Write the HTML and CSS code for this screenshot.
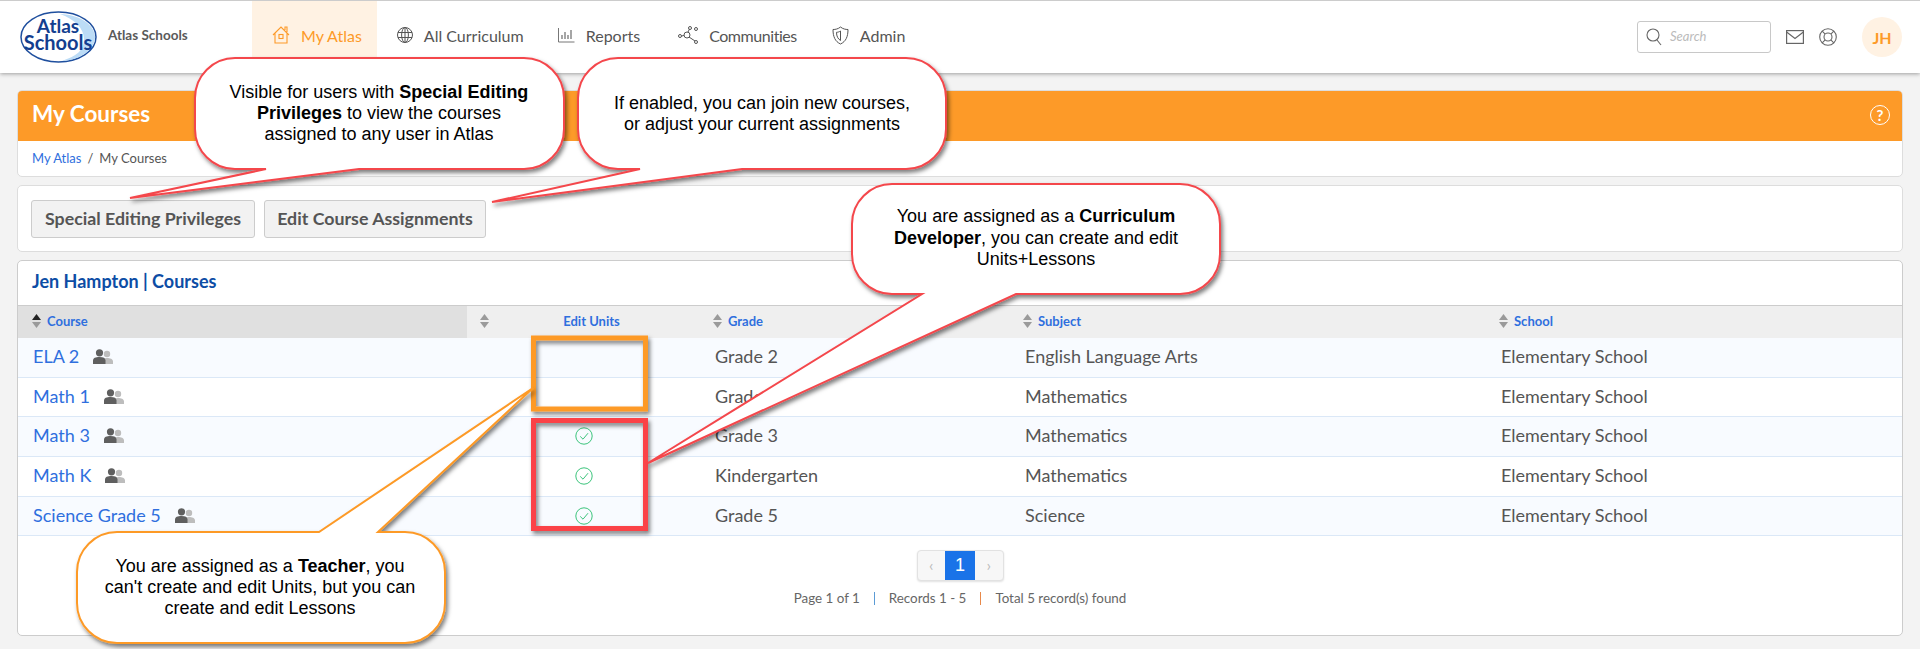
FILE: index.html
```html
<!DOCTYPE html>
<html lang="en">
<head>
    <meta charset="UTF-8">
    <meta name="viewport" content="width=device-width, initial-scale=1.0">
    <title>My Courses</title>
    <link rel="stylesheet" href="styles.css">
</head>
<body>
    <svg class="defs" width="0" height="0">
        <defs>
            <symbol id="sort" viewBox="0 0 9 14">
                <path d="M4.5 0 9 6H0z" fill="#9a9a9a"/>
                <path d="M4.5 14 9 8H0z" fill="#9a9a9a"/>
            </symbol>
            <symbol id="sort-up" viewBox="0 0 9 14">
                <path d="M4.5 0 9 6H0z" fill="#222"/>
                <path d="M4.5 14 9 8H0z" fill="#9a9a9a"/>
            </symbol>
            <symbol id="people" viewBox="0 0 20 16">
                <circle cx="14" cy="5" r="3.2" fill="#bdbdbd"/>
                <path d="M9 15v-2.5C9 10 11 9 14 9s6 1 6 3.5V15z" fill="#bdbdbd"/>
                <circle cx="6.5" cy="3.8" r="3.6" fill="#5f5f5f"/>
                <path d="M0 15v-3.5C0 9 2.5 8 6.5 8s6 1 6 3.5V15z" fill="#5f5f5f"/>
            </symbol>
            <symbol id="check" viewBox="0 0 18 18">
                <circle cx="9" cy="9" r="8.2" fill="none" stroke="#3cc47c" stroke-width="1"/>
                <path d="M5.2 9.4 8 12.2 13 6.2" fill="none" stroke="#3cc47c" stroke-width="1"/>
            </symbol>
            <filter id="drop" x="-10%" y="-10%" width="125%" height="125%">
                <feDropShadow dx="2" dy="3" stdDeviation="2.2" flood-color="#000" flood-opacity="0.5"/>
            </filter>
        </defs>
    </svg>

    <header class="topbar">
        <div class="brand">
            <svg class="logo" viewBox="0 0 77 52" width="77" height="52">
                <ellipse cx="38.5" cy="26" rx="37.5" ry="25" fill="#fff" stroke="#1f4f9e" stroke-width="1.5"/>
                <path d="M40 3C62 4 75 15 75 26c0 12-14 23-33 24 14-5 22-10 22-22C64 17 54 8 40 3z" fill="#bcdcf6"/>
                <text class="logo-text" x="38" y="22" font-size="19">Atlas</text>
                <text class="logo-text" x="38" y="39" font-size="20">Schools</text>
            </svg>
            <span class="brand-name">Atlas Schools</span>
        </div>
        <nav class="nav">
            <a class="nav-item active">
                <svg width="18" height="20" viewBox="0 0 18 20" fill="none" stroke="#fd9a28" stroke-width="1.1">
                    <path d="M1 10 9 2l8 8M3 8v10h12V8M13 5V2h2v5"/>
                    <rect x="7" y="9.5" width="4" height="4"/>
                </svg>
                My Atlas
            </a>
            <a class="nav-item nav-curriculum">
                <svg width="16" height="18" viewBox="0 0 16 18" fill="none" stroke="#555" stroke-width="1">
                    <circle cx="8" cy="9" r="7.5"/>
                    <ellipse cx="8" cy="9" rx="3.4" ry="7.5"/>
                    <path d="M8 1.5v15M1 6.5h14M1 11.5h14"/>
                </svg>
                All Curriculum
            </a>
            <a class="nav-item">
                <svg width="17" height="16" viewBox="0 0 17 16" fill="none" stroke="#777" stroke-width="1">
                    <path d="M.5 1v14h16"/>
                    <path d="M4 12V8M7 12V5M10 12V8M13 12V3" stroke-width="1.3"/>
                </svg>
                Reports
            </a>
            <a class="nav-item nav-communities">
                <svg width="20" height="18" viewBox="0 0 20 18" fill="none" stroke="#555" stroke-width="1">
                    <circle cx="2" cy="10" r="1.5"/>
                    <circle cx="9" cy="9" r="3"/>
                    <circle cx="12" cy="2" r="1.5"/>
                    <circle cx="18" cy="3" r="1.5"/>
                    <circle cx="18" cy="16" r="1.5"/>
                    <path d="M3.5 10 6 9.5M10 6l1.5-3M11 11l6 4"/>
                </svg>
                Communities
            </a>
            <a class="nav-item">
                <svg width="17" height="19" viewBox="0 0 17 19" fill="none" stroke="#555" stroke-width="1">
                    <path d="M8.5 1C6 3 3.5 3.5 1 3.5c0 7 2 12 7.5 14.500C14 15.500 16 10.500 16 3.500 13.500 3.500 11 3 8.500 1z"/>
                    <path d="M8.5 5C7 6 5.500 6.300 4.500 6.300c0 4 1.500 6.700 4 8.200z"/>
                </svg>
                Admin
            </a>
        </nav>
        <div class="top-tools">
            <label class="search">
                <svg width="16" height="18" viewBox="0 0 16 18" fill="none" stroke="#666" stroke-width="1.1">
                    <circle cx="7" cy="7" r="6"/>
                    <path d="M11 12l4 5"/>
                </svg>
                <span class="search-hint">Search</span>
            </label>
            <svg width="18" height="14" viewBox="0 0 18 14" fill="none" stroke="#666" stroke-width="1.2">
                <rect x=".6" y=".6" width="16.8" height="12.8"/>
                <path d="M.6 2 9 8.5 17.4 2"/>
            </svg>
            <svg width="18" height="18" viewBox="0 0 18 18" fill="none" stroke="#666" stroke-width="1.1">
                <circle cx="9" cy="9" r="8.3"/>
                <circle cx="9" cy="9" r="4"/>
                <path d="M3.2 3.2 6.2 6.2M14.8 3.2 11.8 6.2M3.2 14.8 6.2 11.8M14.8 14.8 11.8 11.8"/>
            </svg>
            <div class="avatar">JH</div>
        </div>
    </header>

    <main class="content">
        <section class="panel">
            <div class="title-bar">
                <h1>My Courses</h1>
                <span class="help">?</span>
            </div>
            <div class="breadcrumb"><a>My Atlas</a><span class="slash">/</span>My Courses</div>
        </section>

        <section class="panel actions">
            <button class="btn btn-special">Special Editing Privileges</button>
            <button class="btn">Edit Course Assignments</button>
        </section>

        <section class="panel courses">
            <h2 class="courses-title">Jen Hampton | Courses</h2>
            <table class="course-table">
                <colgroup>
                    <col class="col-course">
                    <col class="col-units">
                    <col class="col-grade">
                    <col class="col-subject">
                    <col>
                </colgroup>
                <thead>
                    <tr>
                        <th class="sorted"><span class="th-in"><svg class="sort"><use href="#sort-up"/></svg>Course</span></th>
                        <th><span class="th-in th-units"><svg class="sort"><use href="#sort"/></svg><span class="th-center">Edit Units</span></span></th>
                        <th><span class="th-in"><svg class="sort"><use href="#sort"/></svg>Grade</span></th>
                        <th><span class="th-in"><svg class="sort"><use href="#sort"/></svg>Subject</span></th>
                        <th><span class="th-in"><svg class="sort"><use href="#sort"/></svg>School</span></th>
                    </tr>
                </thead>
                <tbody>
                    <tr>
                        <td class="name"><a>ELA 2</a><svg class="people"><use href="#people"/></svg></td>
                        <td class="units"></td>
                        <td>Grade 2</td>
                        <td>English Language Arts</td>
                        <td>Elementary School</td>
                    </tr>
                    <tr>
                        <td class="name"><a>Math 1</a><svg class="people"><use href="#people"/></svg></td>
                        <td class="units"></td>
                        <td>Grade 1</td>
                        <td>Mathematics</td>
                        <td>Elementary School</td>
                    </tr>
                    <tr>
                        <td class="name"><a>Math 3</a><svg class="people"><use href="#people"/></svg></td>
                        <td class="units"><svg class="check"><use href="#check"/></svg></td>
                        <td>Grade 3</td>
                        <td>Mathematics</td>
                        <td>Elementary School</td>
                    </tr>
                    <tr>
                        <td class="name"><a>Math K</a><svg class="people"><use href="#people"/></svg></td>
                        <td class="units"><svg class="check"><use href="#check"/></svg></td>
                        <td>Kindergarten</td>
                        <td>Mathematics</td>
                        <td>Elementary School</td>
                    </tr>
                    <tr>
                        <td class="name"><a>Science Grade 5</a><svg class="people"><use href="#people"/></svg></td>
                        <td class="units"><svg class="check"><use href="#check"/></svg></td>
                        <td>Grade 5</td>
                        <td>Science</td>
                        <td>Elementary School</td>
                    </tr>
                </tbody>
            </table>
            <div class="paging">
                <div class="pager">
                    <span class="pager-arrow">&#8249;</span>
                    <span class="pager-num">1</span>
                    <span class="pager-arrow">&#8250;</span>
                </div>
                <div class="paging-info">
                    <span>Page 1 of 1</span><i class="sep sep-blue"></i><span>Records 1 - 5</span><i class="sep sep-orange"></i><span>Total 5 record(s) found</span>
                </div>
            </div>
        </section>
    </main>

    <!-- annotations drawn over the screenshot -->
    <svg class="marks" width="1920" height="649" viewBox="0 0 1920 649">
        <g filter="url(#drop)" fill="none" stroke-width="5">
            <rect x="533.5" y="338" width="112" height="71" stroke="#fd9a28"/>
            <rect x="533.5" y="420.5" width="112" height="108" stroke="#fb4346"/>
        </g>
        <g filter="url(#drop)" fill="#fff" stroke="#f4474c" stroke-width="2">
            <path d="M235 58H524A40 40 0 0 1 564 98V129A40 40 0 0 1 524 169H359L130 198 266 169H235A40 40 0 0 1 195 129V98A40 40 0 0 1 235 58Z"/>
            <path d="M618 58H906A40 40 0 0 1 946 98V129A40 40 0 0 1 906 169H742L492 202 640 169H618A40 40 0 0 1 578 129V98A40 40 0 0 1 618 58Z"/>
            <path d="M892 184H1180A40 40 0 0 1 1220 224V254A40 40 0 0 1 1180 294H1016L648 463 922 294H892A40 40 0 0 1 852 254V224A40 40 0 0 1 892 184Z"/>
            <path stroke="#fd9a28" d="M117 532H319L533 388 378 532H405A40 40 0 0 1 445 572V603A40 40 0 0 1 405 643H117A40 40 0 0 1 77 603V572A40 40 0 0 1 117 532Z"/>
        </g>
    </svg>
    <div class="note note-special">Visible for users with <b>Special Editing</b><br><b>Privileges</b> to view the courses<br>assigned to any user in Atlas</div>
    <div class="note note-assign">If enabled, you can join new courses,<br>or adjust your current assignments</div>
    <div class="note note-developer">You are assigned as a <b>Curriculum</b><br><b>Developer</b>, you can create and edit<br>Units+Lessons</div>
    <div class="note note-teacher">You are assigned as a <b>Teacher</b>, you<br>can't create and edit Units, but you can<br>create and edit Lessons</div>
</body>
</html>
```

FILE: styles.css
```css
/* Basic reset */
* {
    margin: 0;
    padding: 0;
    box-sizing: border-box;
}

body {
    position: relative;
    height: 649px;
    overflow: hidden;
    background-color: #f3f3f3;
    color: #555;
    font-family: 'Lato', sans-serif;
}

.defs {
    position: absolute;
}

a {
    color: #2f6fde;
}

/* Top bar */
.topbar {
    display: flex;
    align-items: stretch;
    height: 73px;
    padding-right: 18px;
    background-color: #fff;
    border-top: 1px solid #ccc;
    box-shadow: 0 1px 4px rgba(0, 0, 0, 0.35);
}

.brand {
    display: flex;
    align-items: center;
    gap: 11px;
    width: 252px;
    padding-left: 20px;
}

.logo-text {
    fill: #133e8f;
    font-family: 'Lato', sans-serif;
    font-weight: 700;
    text-anchor: middle;
}

.brand-name {
    padding-bottom: 4px;
    font-size: 13.5px;
    font-weight: 700;
    color: #5a5a5a;
}

.nav {
    display: flex;
}

.nav-item {
    display: flex;
    align-items: center;
    gap: 11px;
    padding: 0 15px 4px 20px;
    color: #555;
    font-size: 16px;
}

.nav-item.active {
    gap: 11px;
    color: #fd9a28;
    background-color: #fff2e3;
}

.nav-curriculum {
    padding-right: 14px;
}

.nav-communities {
    margin-left: 3px;
    letter-spacing: -0.45px;
}

.top-tools {
    display: flex;
    align-items: center;
    margin-left: auto;
    gap: 15px;
}

.search {
    display: flex;
    align-items: center;
    gap: 8px;
    width: 134px;
    height: 32px;
    padding: 0 0 1px 8px;
    border: 1px solid #c8c8c8;
    border-radius: 3px;
}

.search-hint {
    padding-bottom: 1px;
    font-size: 13px;
    font-style: italic;
    color: #bbb;
}

.avatar {
    display: flex;
    align-items: center;
    justify-content: center;
    width: 40px;
    height: 40px;
    margin-left: 10px;
    border-radius: 50%;
    background-color: #fff2e3;
    color: #fd9a28;
    font-size: 16px;
    font-weight: 700;
}

/* Panels */
.content {
    display: flex;
    flex-direction: column;
    gap: 8px;
    padding: 17px 17px 0;
}

.panel {
    background-color: #fff;
    border: 1px solid #ddd;
    border-radius: 5px;
    overflow: hidden;
}

.title-bar {
    display: flex;
    align-items: center;
    justify-content: space-between;
    height: 50px;
    padding: 0 12px 2px 14px;
    background-color: #fd9a28;
    color: #fff;
}

.title-bar h1 {
    padding-bottom: 3px;
    font-size: 22.5px;
    font-weight: 700;
}

.help {
    display: flex;
    align-items: center;
    justify-content: center;
    width: 20px;
    height: 20px;
    border: 1.5px solid #fff;
    border-radius: 50%;
    font-size: 15px;
    font-weight: 700;
}

.breadcrumb {
    height: 35px;
    padding: 0 14px;
    font-size: 13px;
    line-height: 34px;
}

.slash {
    margin: 0 6px;
}

.actions {
    display: flex;
    gap: 9px;
    height: 67px;
    padding: 14px 13px;
}

.btn {
    width: 222px;
    height: 38px;
    padding-bottom: 3px;
    background-color: #f2f2f2;
    border: 1px solid #ccc;
    border-radius: 3px;
    color: #555;
    font-family: 'Lato', sans-serif;
    font-size: 17.8px;
    font-weight: 700;
}

.btn-special {
    width: 224px;
}

/* Courses table */
.courses {
    height: 376px;
    border-color: #ccc;
}

.courses-title {
    height: 44px;
    padding-left: 14px;
    color: #0d4da5;
    font-size: 18px;
    font-weight: 700;
    line-height: 40px;
}

.course-table {
    width: 100%;
    border-collapse: collapse;
    table-layout: fixed;
}

.col-course {
    width: 449px;
}

.col-units {
    width: 238px;
}

.col-grade {
    width: 310px;
}

.col-subject {
    width: 476px;
}

.course-table th {
    height: 32px;
    padding: 0 0 1px 8px;
    background-color: #efefef;
    border-top: 1px solid #ccc;
    color: #2f6fde;
    font-size: 13px;
    font-weight: 700;
    text-align: left;
}

.course-table th.sorted {
    padding-left: 14px;
    background-color: #e0e0e0;
}

.course-table th:nth-child(2) {
    padding-left: 13px;
    padding-right: 17px;
}

.th-in {
    display: flex;
    align-items: center;
    gap: 6px;
}

.th-center {
    flex: 1;
    text-align: center;
}

.sort {
    width: 9px;
    height: 14px;
    flex-shrink: 0;
}

.course-table td {
    height: 39.7px;
    padding: 0 0 3px 10px;
    border-bottom: 1px solid #dbe8f7;
    font-size: 18px;
    white-space: nowrap;
}

.course-table tbody tr:nth-child(odd) {
    background-color: #f8fbff;
}

.course-table td.name {
    padding-left: 15px;
}

.course-table td.units {
    padding: 0 4px 5px 0;
    text-align: center;
}

.people {
    width: 20px;
    height: 16px;
    margin-left: 14px;
    vertical-align: -2px;
}

.check {
    width: 18px;
    height: 18px;
    vertical-align: middle;
}

/* Paging */
.paging {
    display: flex;
    flex-direction: column;
    align-items: center;
    gap: 9px;
    padding-top: 14px;
}

.pager {
    display: flex;
    width: 87px;
    height: 31px;
    background-color: #f7f7f7;
    border: 1px solid #e2e2e2;
    border-radius: 4px;
    box-shadow: 0 1px 2px rgba(0, 0, 0, 0.12);
    overflow: hidden;
}

.pager-arrow {
    flex: 1;
    color: #bbb;
    font-size: 16px;
    line-height: 27px;
    text-align: center;
}

.pager-num {
    width: 30px;
    background-color: #1a73e8;
    color: #fff;
    font-family: 'Liberation Sans', sans-serif;
    font-size: 18px;
    line-height: 29px;
    text-align: center;
}

.paging-info {
    display: flex;
    align-items: center;
    gap: 14px;
    color: #666;
    font-size: 13.4px;
}

.sep {
    width: 1px;
    height: 13px;
}

.sep-blue {
    background-color: #5b9bd5;
}

.sep-orange {
    background-color: #e8894a;
}

/* Annotations */
.marks {
    position: absolute;
    top: 0;
    left: 0;
}

.note {
    position: absolute;
    width: 340px;
    color: #000;
    font-family: 'Liberation Sans', Arial, sans-serif;
    font-size: 18px;
    line-height: 21px;
    text-align: center;
    white-space: nowrap;
}

.note-special {
    top: 82px;
    left: 209px;
}

.note-assign {
    top: 93px;
    left: 592px;
}

.note-developer {
    top: 206px;
    left: 866px;
    line-height: 21.7px;
}

.note-teacher {
    top: 556px;
    left: 90px;
}
```
